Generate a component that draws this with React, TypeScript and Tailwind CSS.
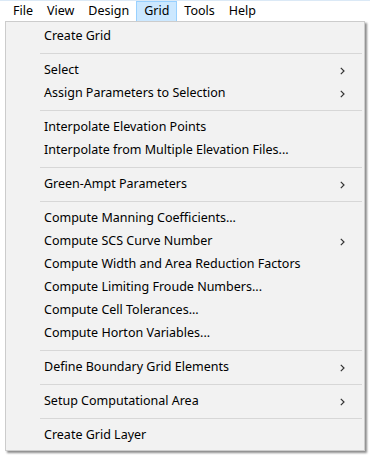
import React from "react";

type Entry = { label: string; sub?: boolean } | "sep";

const items: Entry[] = [
  { label: "Create Grid" },
  "sep",
  { label: "Select", sub: true },
  { label: "Assign Parameters to Selection", sub: true },
  "sep",
  { label: "Interpolate Elevation Points" },
  { label: "Interpolate from Multiple Elevation Files..." },
  "sep",
  { label: "Green-Ampt Parameters", sub: true },
  "sep",
  { label: "Compute Manning Coefficients..." },
  { label: "Compute SCS Curve Number", sub: true },
  { label: "Compute Width and Area Reduction Factors" },
  { label: "Compute Limiting Froude Numbers..." },
  { label: "Compute Cell Tolerances..." },
  { label: "Compute Horton Variables..." },
  "sep",
  { label: "Define Boundary Grid Elements", sub: true },
  "sep",
  { label: "Setup Computational Area", sub: true },
  "sep",
  { label: "Create Grid Layer" },
];

const menus = ["File", "View", "Design", "Grid", "Tools", "Help"];

function Chevron() {
  return (
    <svg width="5" height="8" viewBox="0 0 5 8" className="text-[#333]">
      <path d="M0.8 0.8 L4 4 L0.8 7.2" fill="none" stroke="currentColor" strokeWidth="1.2" />
    </svg>
  );
}

export default function App() {
  return (
    <div
      className="w-[370px] h-[455px] bg-white overflow-hidden text-[12.5px] text-black"
      style={{ fontFamily: '"Noto Sans", "Open Sans", sans-serif' }}
    >
      {/* menu bar */}
      <div className="h-[21px] flex items-stretch border-t border-[#dbe9f6] pl-[6px]">
        {menus.map((m) => (
          <div
            key={m}
            className={
              m === "Grid"
                ? "px-[7px] flex items-center bg-[#cce8ff] border border-[#99d1ff] border-b-0"
                : "px-[7px] flex items-center"
            }
          >
            {m}
          </div>
        ))}
      </div>

      {/* dropdown */}
      <div className="ml-[5px] w-[360px] bg-[#f2f2f2] border border-[#cccccc] shadow-[2px_2px_2px_rgba(0,0,0,0.45)] py-[3px] pr-[2px]">
        {items.map((it, i) =>
          it === "sep" ? (
            <div key={i} className="h-[11px] flex items-center pl-[34px]">
              <div className="h-px w-full bg-[#d7d7d7]" />
            </div>
          ) : (
            <div key={i} className="h-[23px] flex items-center pl-[38px] pr-[17px]">
              <span className="flex-1 leading-none">{it.label}</span>
              {it.sub && <Chevron />}
            </div>
          )
        )}
      </div>
    </div>
  );
}
